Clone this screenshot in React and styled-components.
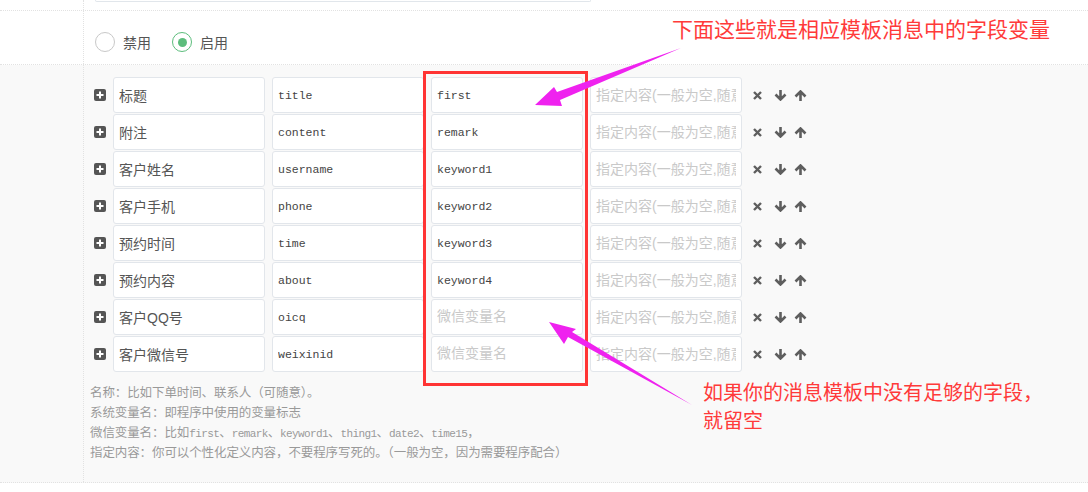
import React from 'react'
import styled, { createGlobalStyle } from 'styled-components'

const GlobalStyle = createGlobalStyle`
  body {
    margin: 0;
    background: #fff;
    font-family: "Liberation Sans", "Noto Sans CJK SC", sans-serif;
  }
`

const Page = styled.div`
  position: relative;
  width: 1088px;
  height: 492px;
  overflow: hidden;
  background: #fff;
`

const FormRow = styled.div`
  display: flex;
  background: ${p => (p.shaded ? '#f9f9f9' : '#fff')};
  border-bottom: 1px dotted #e2e2e2;
`

const LabelCell = styled.div`
  width: 83px;
  flex-shrink: 0;
  border-right: 1px dotted #e2e2e2;
`

const ContentCell = styled.div`
  flex: 1;
  padding: ${p => p.pad || '0'};
`

const CutInput = styled.div`
  width: 494px;
  height: 1px;
  margin-left: 11px;
  border: 1px solid #e1e6eb;
  border-top: none;
  border-radius: 0 0 3px 3px;
`

const RadioGroup = styled.div`
  display: flex;
  align-items: center;
  gap: 21px;
  padding: 21px 0 12px 11px;
`

const RadioLabel = styled.label`
  display: flex;
  align-items: center;
  gap: 8px;
  font-size: 14px;
  color: #555;
`

const RadioCircle = styled.span`
  width: 20px;
  height: 20px;
  box-sizing: border-box;
  border-radius: 50%;
  border: 1px solid ${p => (p.checked ? '#5cbd7c' : '#c8c8c8')};
  background: #fff;
  display: flex;
  align-items: center;
  justify-content: center;

  &::after {
    content: '';
    width: 9px;
    height: 9px;
    border-radius: 50%;
    background: ${p => (p.checked ? '#5cbd7c' : 'transparent')};
  }
`

const FieldList = styled.div`
  display: flex;
  flex-direction: column;
  gap: 1px;
  padding-left: 4px;
`

const FieldRow = styled.div`
  display: flex;
  align-items: center;
  height: 36px;
`

const AddIcon = styled.span`
  display: flex;
  width: 12px;
  height: 12px;
  margin-right: 7px;
`

const Field = styled.input`
  width: 152px;
  height: 36px;
  box-sizing: border-box;
  margin-right: 7px;
  padding: 0 5px;
  border: 1px solid #e2e6eb;
  border-radius: 3px;
  background: #fff;
  outline: none;
  color: ${p => (p.mono ? '#444' : '#555')};
  font-family: ${p =>
    p.mono
      ? '"Liberation Mono", "Noto Sans CJK SC", monospace'
      : '"Liberation Sans", "Noto Sans CJK SC", sans-serif'};
  font-size: ${p => (p.mono ? '11.5px' : '14px')};

  &::placeholder {
    color: #c9c9c9;
    font-family: "Liberation Sans", "Noto Sans CJK SC", sans-serif;
    font-size: 14px;
  }
`

const Actions = styled.div`
  display: flex;
  align-items: center;
  margin-left: 4px;
`

const ActionIcon = styled.span`
  display: flex;
  margin-right: ${p => p.gap || '7px'};
`

const Hints = styled.div`
  padding-top: 12px;
  font-family: "Liberation Mono", "Noto Sans CJK SC", monospace;
  font-size: 12.5px;
  letter-spacing: -0.1px;
  line-height: 20px;
  color: #999;
`

const Code = styled.span`
  font-size: 11px;
  letter-spacing: -0.6px;
`

const RedBox = styled.div`
  position: absolute;
  left: 423px;
  top: 71px;
  width: 165px;
  height: 315px;
  box-sizing: border-box;
  border: 3px solid #ff3434;
  pointer-events: none;
`

const Note = styled.div`
  position: absolute;
  left: ${p => p.x}px;
  top: ${p => p.y}px;
  color: #ff3a3a;
  font-family: "Noto Sans CJK SC", sans-serif;
  font-size: ${p => p.size}px;
  line-height: 28px;
  white-space: nowrap;
`

const ArrowLayer = styled.svg`
  position: absolute;
  left: 0;
  top: 0;
  pointer-events: none;
`

const PlusSquare = () => (
  <svg width="12" height="12" viewBox="0 0 12 12">
    <rect width="12" height="12" rx="2" fill="#555" />
    <path d="M6 2.5v7M2.5 6h7" stroke="#fff" strokeWidth="2" />
  </svg>
)

const Times = () => (
  <svg width="9" height="9" viewBox="0 0 9 9">
    <path d="M1 1L8 8M8 1L1 8" stroke="#5e5e5e" strokeWidth="2.4" />
  </svg>
)

const ArrowDown = () => (
  <svg width="13" height="11" viewBox="0 0 13 11">
    <path d="M6.5 0v9M1.5 4.5l5 5 5-5" stroke="#5e5e5e" strokeWidth="2.6" fill="none" />
  </svg>
)

const ArrowUp = () => (
  <svg width="13" height="11" viewBox="0 0 13 11">
    <path d="M6.5 11V2M1.5 6.5l5-5 5 5" stroke="#5e5e5e" strokeWidth="2.6" fill="none" />
  </svg>
)

const fields = [
  { name: '标题', sys: 'title', wx: 'first' },
  { name: '附注', sys: 'content', wx: 'remark' },
  { name: '客户姓名', sys: 'username', wx: 'keyword1' },
  { name: '客户手机', sys: 'phone', wx: 'keyword2' },
  { name: '预约时间', sys: 'time', wx: 'keyword3' },
  { name: '预约内容', sys: 'about', wx: 'keyword4' },
  { name: '客户QQ号', sys: 'oicq', wx: '' },
  { name: '客户微信号', sys: 'weixinid', wx: '' },
]

const App = () => (
  <Page>
    <GlobalStyle />

    <FormRow>
      <LabelCell />
      <ContentCell pad="0 0 8px">
        <CutInput />
      </ContentCell>
    </FormRow>

    <FormRow>
      <LabelCell />
      <ContentCell>
        <RadioGroup>
          <RadioLabel>
            <RadioCircle />
            禁用
          </RadioLabel>
          <RadioLabel>
            <RadioCircle checked />
            启用
          </RadioLabel>
        </RadioGroup>
      </ContentCell>
    </FormRow>

    <FormRow shaded>
      <LabelCell />
      <ContentCell pad="12px 0 18px 6px">
        <FieldList>
          {fields.map(f => (
            <FieldRow key={f.sys}>
              <AddIcon>
                <PlusSquare />
              </AddIcon>
              <Field readOnly defaultValue={f.name} placeholder="名称" />
              <Field mono readOnly defaultValue={f.sys} placeholder="系统变量名" />
              <Field mono readOnly defaultValue={f.wx} placeholder="微信变量名" />
              <Field readOnly defaultValue="" placeholder="指定内容(一般为空,随意填写)" />
              <Actions>
                <ActionIcon gap="12px"><Times /></ActionIcon>
                <ActionIcon><ArrowDown /></ActionIcon>
                <ActionIcon><ArrowUp /></ActionIcon>
              </Actions>
            </FieldRow>
          ))}
        </FieldList>
        <Hints>
          <div>名称：比如下单时间、联系人（可随意）。</div>
          <div>系统变量名：即程序中使用的变量标志</div>
          <div>
            微信变量名：比如<Code>first</Code>、<Code>remark</Code>、<Code>keyword1</Code>、
            <Code>thing1</Code>、<Code>date2</Code>、<Code>time15</Code>，
          </div>
          <div>指定内容：你可以个性化定义内容，不要程序写死的。（一般为空，因为需要程序配合）</div>
        </Hints>
      </ContentCell>
    </FormRow>

    <RedBox />

    <Note x={672} y={14} size={21}>下面这些就是相应模板消息中的字段变量</Note>
    <Note x={703} y={378} size={20}>
      如果你的消息模板中没有足够的字段，
      <br />
      就留空
    </Note>

    <ArrowLayer width="1088" height="492">
      <polygon
        points="535,105 554,87 557,92 681,48 560,100 562,106"
        fill="#ef22ef"
      />
      <polygon
        points="549,322 576,329 572,332 692,405 568,337 564,344"
        fill="#ef22ef"
      />
    </ArrowLayer>
  </Page>
)

export default App
